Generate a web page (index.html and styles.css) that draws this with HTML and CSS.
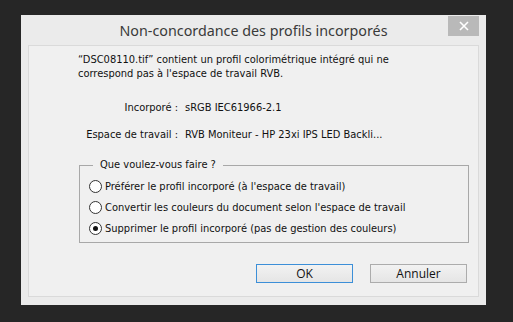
FILE: index.html
```html
<!DOCTYPE html>
<html lang="fr">
<head>
  <meta charset="UTF-8">
  <title>Non-concordance des profils incorporés</title>
  <link rel="stylesheet" href="styles.css">
</head>
<body>
  <div class="window">
    <div class="titlebar">
      <span></span>
      <div class="title">Non-concordance des profils incorporés</div>
      <button class="close" aria-label="Fermer">
        <svg width="10" height="10" viewBox="0 0 10 10">
          <path d="M1 1 L9 9 M9 1 L1 9" stroke="#fff" stroke-width="1.6"/>
        </svg>
      </button>
    </div>

    <div class="client">
      <p class="message">“DSC08110.tif” contient un profil colorimétrique intégré qui ne<br>correspond pas à l'espace de travail RVB.</p>

      <div class="info">
        <div class="label">Incorporé :</div>
        <div class="value">sRGB IEC61966-2.1</div>
        <div class="label">Espace de travail :</div>
        <div class="value">RVB Moniteur - HP 23xi IPS LED Backli...</div>
      </div>

      <fieldset class="group">
        <legend>Que voulez-vous faire ?</legend>
        <label class="option"><input type="radio" name="action"> Préférer le profil incorporé (à l'espace de travail)</label>
        <label class="option"><input type="radio" name="action"> Convertir les couleurs du document selon l'espace de travail</label>
        <label class="option"><input type="radio" name="action" checked> Supprimer le profil incorporé (pas de gestion des couleurs)</label>
      </fieldset>

      <div class="buttons">
        <button class="btn btn-default">OK</button>
        <button class="btn">Annuler</button>
      </div>
    </div>
  </div>
</body>
</html>
```

FILE: styles.css
```css
body {
  margin: 0;
  background: #262626;
  font-family: "DejaVu Sans Condensed", "DejaVu Sans", sans-serif;
  font-size: 11px;
  color: #111;
}
.window {
  margin: 15px 0 0 21px;
  width: 465px;
  height: 290px;
  box-sizing: border-box;
  background: #ebebeb;
  padding: 0 7px 8px 7px;
  display: flex;
  flex-direction: column;
}
.titlebar {
  height: 30px;
  display: grid;
  grid-template-columns: 31px 1fr 31px;
  align-items: start;
}
.title {
  font-family: "Noto Sans", sans-serif;
  font-size: 14.3px;
  color: #3a3a3a;
  text-align: center;
  line-height: 31px;
}
.close {
  margin-top: 1px;
  width: 31px;
  height: 20px;
  border: none;
  padding: 0;
  background: #b9b9b9;
  display: flex;
  align-items: center;
  justify-content: center;
}
.client {
  flex: 1;
  background: #f0f0f0;
  border: 1px solid #dadada;
  padding: 7px 11px 13px 49px;
  display: flex;
  flex-direction: column;
}
.message {
  margin: 0;
  line-height: 14px;
}
.info {
  margin-top: 20px;
  display: grid;
  grid-template-columns: 100px auto;
  column-gap: 7px;
  row-gap: 13px;
  line-height: 14px;
  white-space: nowrap;
}
.label {
  text-align: right;
}
.group {
  margin: 16px 0 0 1px;
  width: 390px;
  box-sizing: border-box;
  border: 1px solid #a8a8a8;
  padding: 4px 0 3px 9px;
}
.group legend {
  margin-left: 4px;
  padding: 0 7px;
  line-height: 14px;
}
.option {
  display: flex;
  align-items: center;
  height: 21px;
  gap: 3px;
}
.option input {
  appearance: none;
  margin: 0;
  width: 13px;
  height: 13px;
  border: 1px solid #333;
  border-radius: 50%;
  background: #fff;
  box-sizing: border-box;
  display: flex;
  align-items: center;
  justify-content: center;
}
.option input:checked::after {
  content: "";
  width: 5px;
  height: 5px;
  border-radius: 50%;
  background: #111;
}
.buttons {
  margin-top: auto;
  display: flex;
  justify-content: flex-end;
  gap: 17px;
}
.btn {
  width: 97px;
  height: 19px;
  padding: 0;
  font-family: "Open Sans", sans-serif;
  font-size: 12px;
  color: #111;
  background: linear-gradient(#f2f2f2, #e5e5e5);
  border: 1px solid #acacac;
}
.btn-default {
  border-color: #3c8fd8;
}
```
